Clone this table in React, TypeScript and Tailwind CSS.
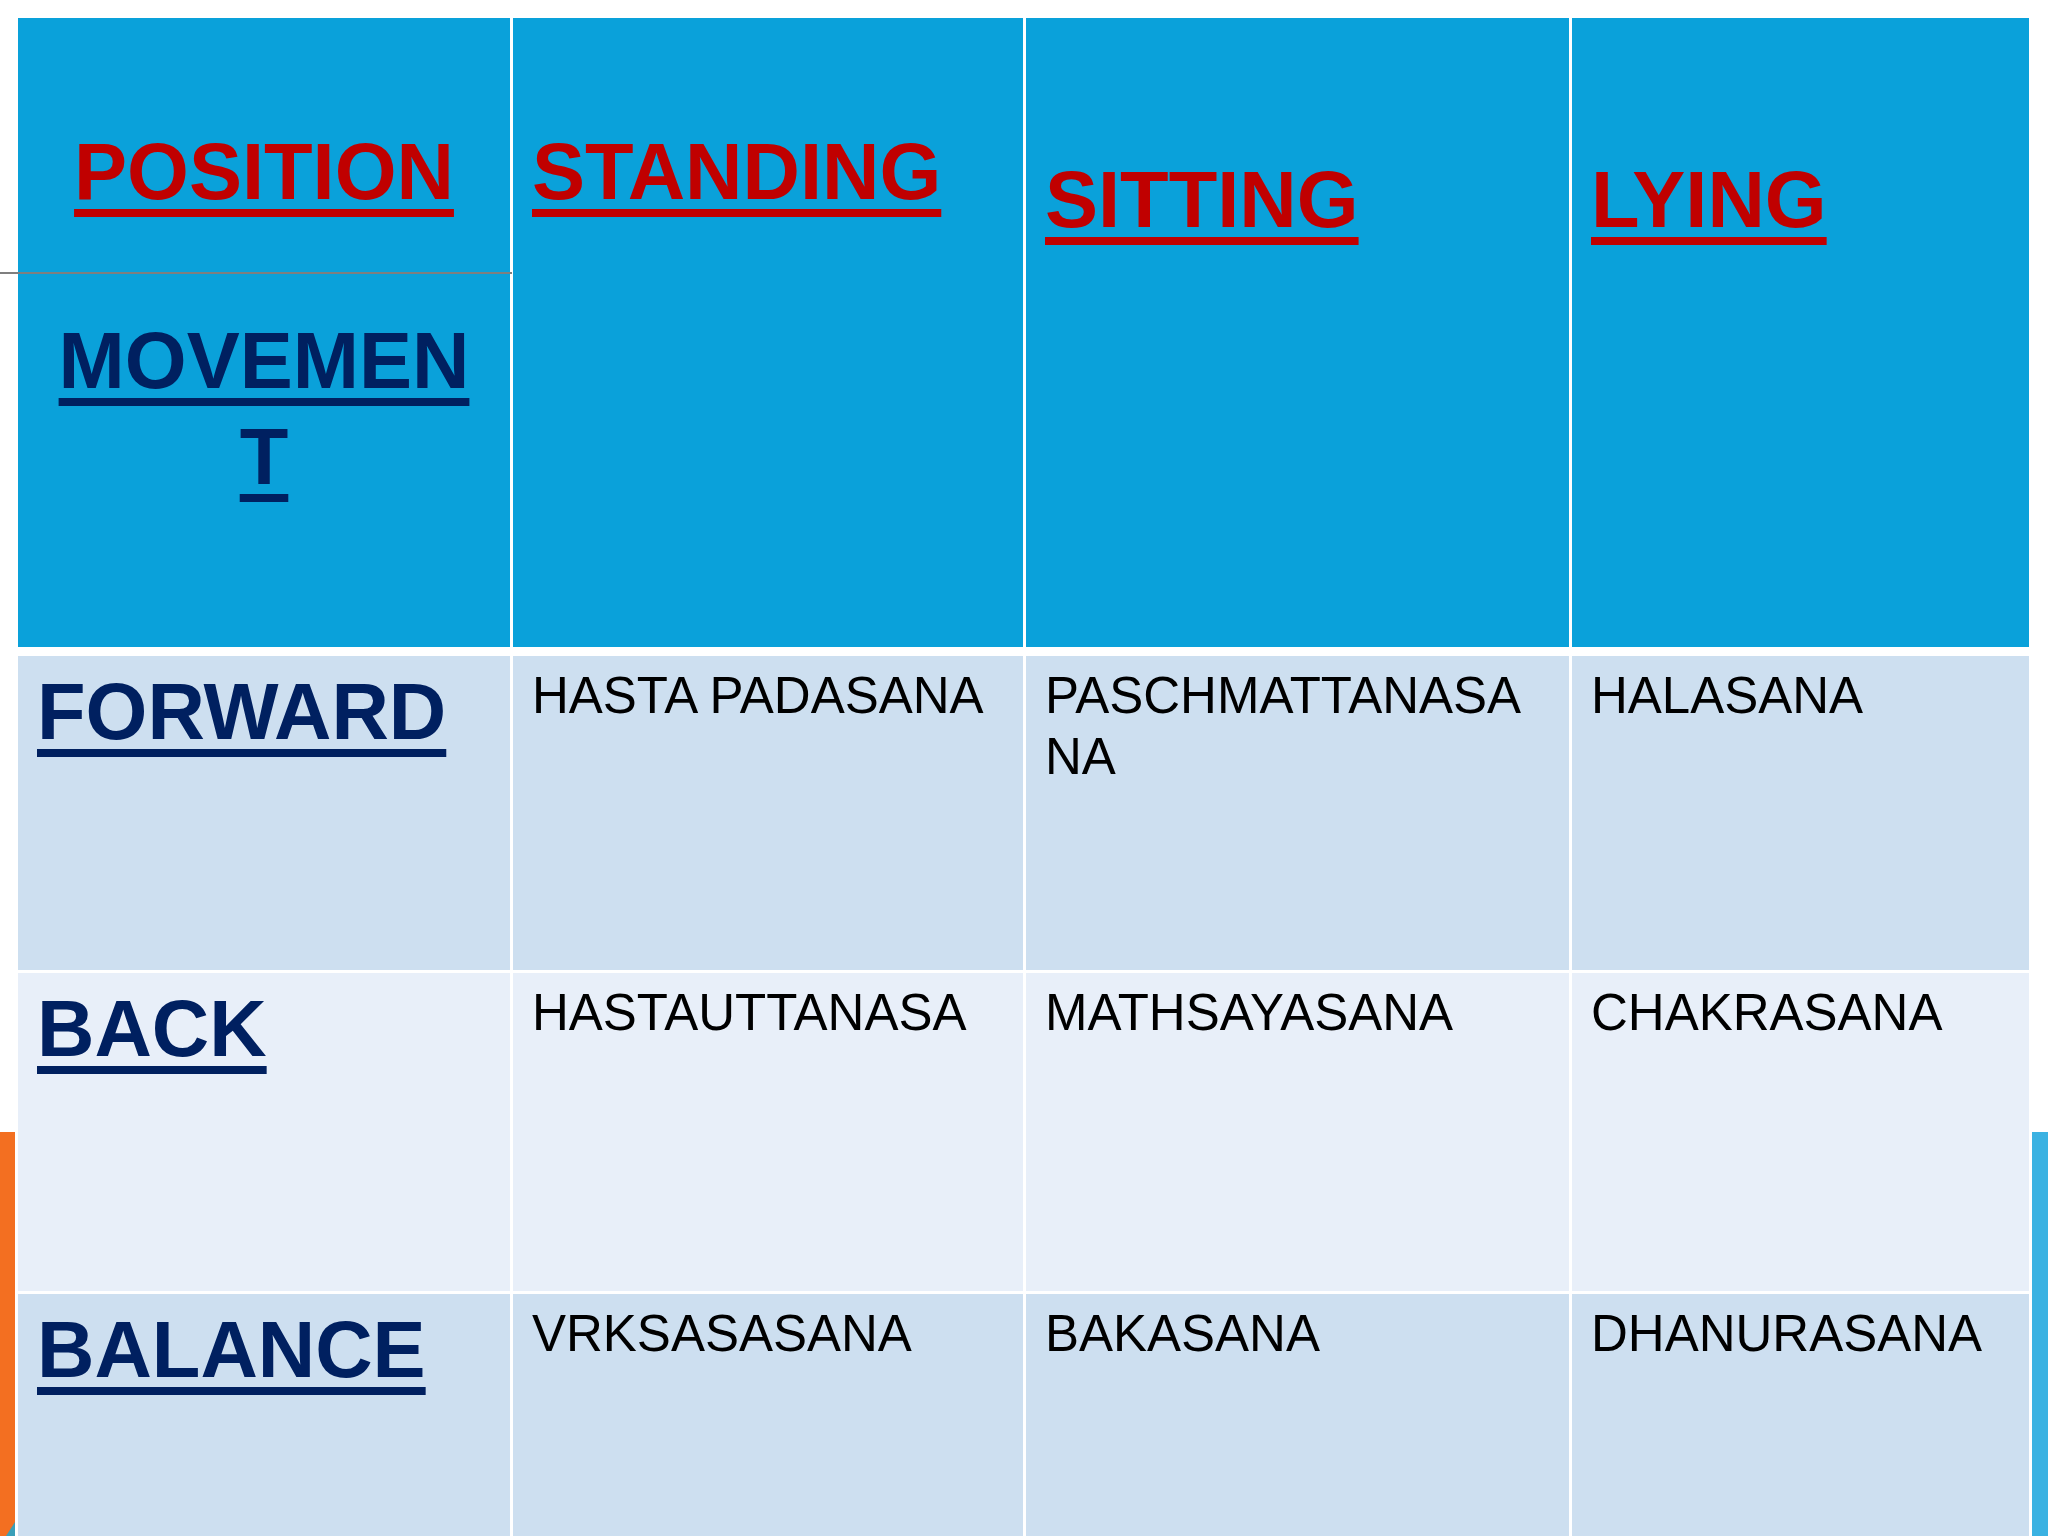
import React from "react";

const font = { fontFamily: '"Liberation Sans", Arial, sans-serif' };

function Label({ children }: { children: React.ReactNode }) {
  return (
    <div className="text-[79.5px] font-bold leading-[1.2] text-[#002060] underline decoration-[8px] underline-offset-[10px]">
      {children}
    </div>
  );
}

function Body({ children }: { children: React.ReactNode }) {
  return <div className="text-[51px] leading-[1.2] text-black">{children}</div>;
}

export default function App() {
  const cols = "grid grid-cols-[492px_510px_543px_457px] gap-x-[3px]";
  const rows: { label: string; cells: React.ReactNode[]; bg: string; h: string }[] = [
    {
      label: "FORWARD",
      cells: [
        "HASTA PADASANA",
        <>
          PASCHMATTANASA
          <br />
          NA
        </>,
        "HALASANA",
      ],
      bg: "bg-[#cddff0]",
      h: "h-[314px]",
    },
    {
      label: "BACK",
      cells: ["HASTAUTTANASA", "MATHSAYASANA", "CHAKRASANA"],
      bg: "bg-[#e8eff9]",
      h: "h-[318px]",
    },
    {
      label: "BALANCE",
      cells: ["VRKSASASANA", "BAKASANA", "DHANURASANA"],
      bg: "bg-[#cddff0]",
      h: "h-[300px]",
    },
  ];

  return (
    <div className="relative w-[2048px] h-[1536px] overflow-hidden bg-white" style={font}>
      {/* decorative slide side bars */}
      <div className="absolute left-0 top-[1132px] w-[15px] h-[404px] bg-[#f36f21]" />
      <div className="absolute left-[6px] top-[1522px] w-0 h-0 border-l-[9px] border-l-transparent border-b-[14px] border-b-[#3a9fb8]" />
      <div className="absolute left-[2032px] top-[1132px] w-[16px] h-[404px] bg-[#3bb2e2]" />

      <div className="relative ml-[18px] pt-[18px] w-[2011px]">
        {/* header row */}
        <div className={`${cols} h-[629px] bg-white`}>
          <div className="bg-[#0aa1da] flex flex-col items-center pt-[106px] text-center">
            <div className="text-[79.5px] font-bold leading-[1.2] text-[#c00000] underline decoration-[8px] underline-offset-[10px]">
              POSITION
            </div>
            <div className="mt-[94px] text-[79.5px] font-bold leading-[1.2] text-[#002060] underline decoration-[8px] underline-offset-[10px]">
              MOVEMEN
              <br />T
            </div>
          </div>
          <div className="bg-[#0aa1da] pl-[19px] pt-[106px]">
            <div className="text-[79.5px] font-bold leading-[1.2] text-[#c00000] underline decoration-[8px] underline-offset-[10px]">
              STANDING
            </div>
          </div>
          <div className="bg-[#0aa1da] pl-[19px] pt-[134px]">
            <div className="text-[79.5px] font-bold leading-[1.2] text-[#c00000] underline decoration-[8px] underline-offset-[10px]">
              SITTING
            </div>
          </div>
          <div className="bg-[#0aa1da] pl-[19px] pt-[134px]">
            <div className="text-[79.5px] font-bold leading-[1.2] text-[#c00000] underline decoration-[8px] underline-offset-[10px]">
              LYING
            </div>
          </div>
        </div>

        {/* body rows */}
        <div className="mt-[9px] flex flex-col gap-y-[3px]">
          {rows.map((r) => (
            <div key={r.label} className={`${cols} ${r.h}`}>
              <div className={`${r.bg} pl-[19px] pt-[8px]`}>
                <Label>{r.label}</Label>
              </div>
              {r.cells.map((c, i) => (
                <div key={i} className={`${r.bg} pl-[19px] pt-[9px]`}>
                  <Body>{c}</Body>
                </div>
              ))}
            </div>
          ))}
        </div>

        {/* thin grey line over header */}
        <div className="absolute left-[-18px] top-[272px] w-[512px] h-[2px] bg-[#7f7f7f]" />
      </div>
    </div>
  );
}
